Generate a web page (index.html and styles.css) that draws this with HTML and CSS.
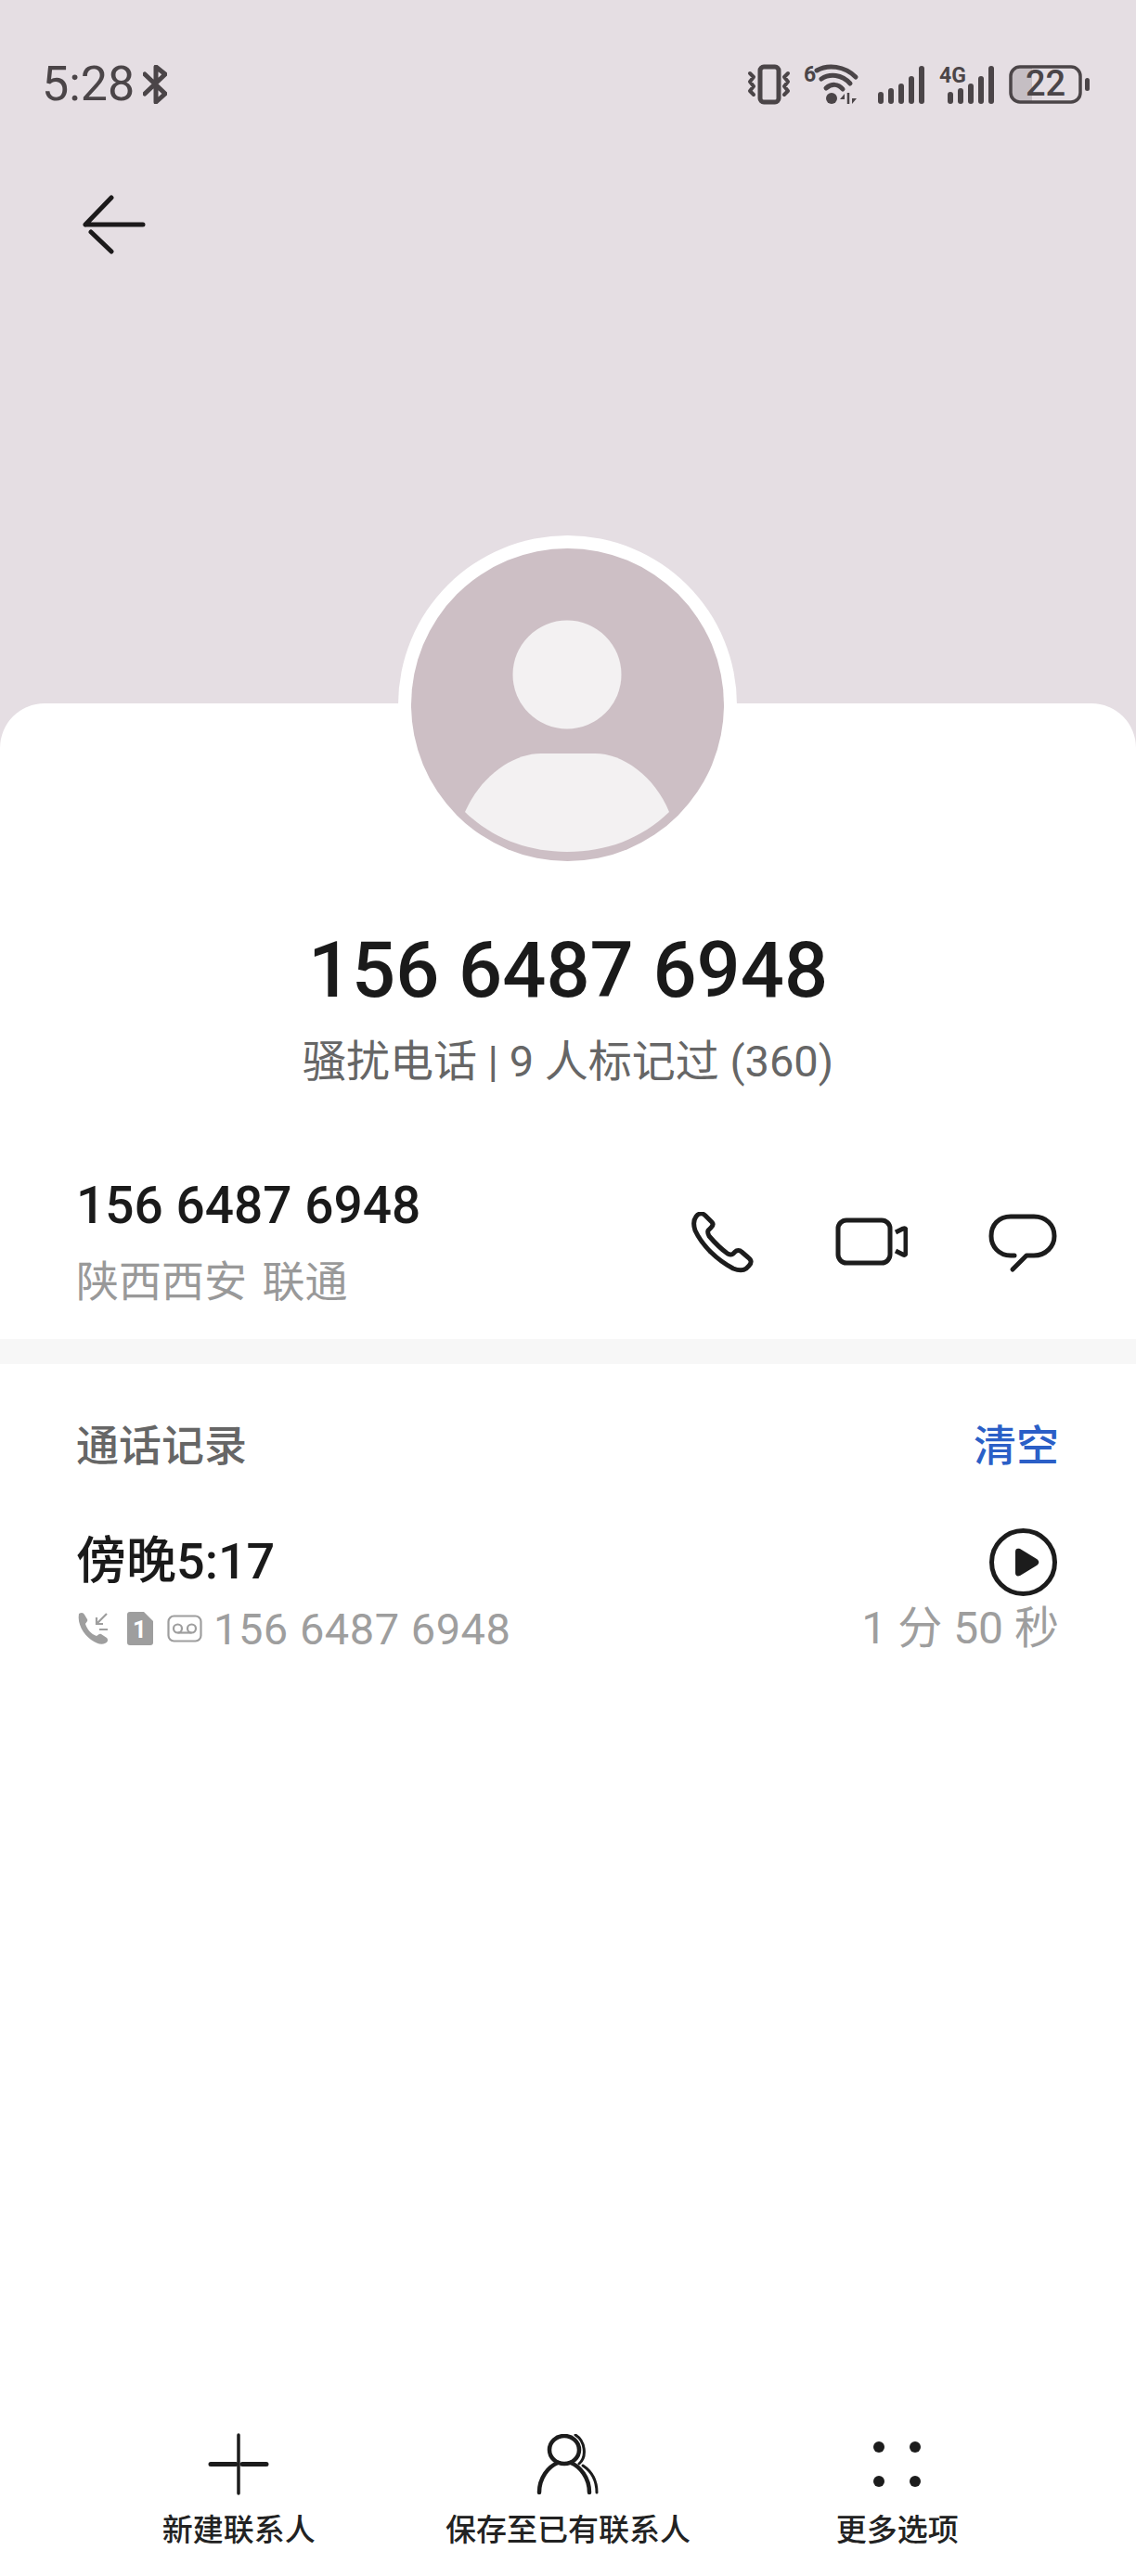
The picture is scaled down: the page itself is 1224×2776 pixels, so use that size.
FILE: index.html
```html
<!DOCTYPE html>
<html lang="zh-CN">
<head>
    <meta charset="UTF-8">
    <meta name="viewport" content="width=device-width, initial-scale=1.0">
    <title>通话详情</title>
    <link rel="stylesheet" href="styles.css">
</head>
<body>
<div class="page">
    <header class="header">
        <div class="status-bar">
            <div class="status-left">
                <span class="status-time">5:28</span>
                <svg class="icon-bt" width="26" height="42" viewBox="0 0 26 42"><path d="M2 31 L24 10 L14 2 V40 L24 31 L2 10" fill="none" stroke="#4b4548" stroke-width="5" stroke-linecap="round" stroke-linejoin="round"/></svg>
            </div>
            <div class="status-right">
                <!-- vibrate -->
                <svg width="47" height="50" viewBox="0 -4 47 50" fill="none" stroke="#4b4548">
                    <rect x="14" y="2" width="20" height="38" rx="4" stroke-width="5"/>
                    <path d="M3 9 L7 13 L3 18 L7 23 L3 28 L7 32 M44 9 L40 13 L44 18 L40 23 L44 28 L40 32" stroke-width="4" stroke-linecap="round" stroke-linejoin="round"/>
                </svg>
                <!-- wifi 6 -->
                <svg width="66" height="50" viewBox="0 -4 66 50" fill="none" stroke="#4b4548">
                    <text x="0" y="18" class="status-mini">6</text>
                    <path d="M14 6 C26 -1 44 1 56 13 M19 15 C28 9 41 10 50 20 M24 25 C30 20 37 20 42 26" stroke-width="5" stroke-linecap="round"/>
                    <circle cx="30" cy="36" r="6" fill="#4b4548" stroke="none"/>
                    <path d="M44 31 L39 37 H44 Z M52 36 H57 L52 42 Z" fill="#4b4548" stroke="none"/>
                    <path d="M48 30 V42" stroke-width="2.5"/>
                </svg>
                <!-- signal -->
                <svg width="52" height="42" viewBox="0 0 52 42" fill="#4b4548">
                    <rect x="0" y="29" width="6" height="13" rx="3"/>
                    <rect x="11" y="25" width="6" height="17" rx="3"/>
                    <rect x="22" y="20" width="6" height="22" rx="3"/>
                    <rect x="33" y="12" width="6" height="30" rx="3"/>
                    <rect x="44" y="1" width="6" height="41" rx="3"/>
                </svg>
                <!-- 4G signal -->
                <svg width="61" height="50" viewBox="0 -4 61 50" fill="#4b4548">
                    <text x="0" y="19" class="status-mini">4G</text>
                    <rect x="9" y="29" width="6" height="13" rx="3"/>
                    <rect x="20" y="25" width="6" height="17" rx="3"/>
                    <rect x="31" y="20" width="6" height="22" rx="3"/>
                    <rect x="42" y="12" width="6" height="30" rx="3"/>
                    <rect x="53" y="1" width="6" height="41" rx="3"/>
                </svg>
                <!-- battery -->
                <svg width="87" height="50" viewBox="0 -4 87 50">
                    <path d="M10 3 H25 V39 H10 A8 8 0 0 1 2 31 V11 A8 8 0 0 1 10 3 Z" fill="#c5bec3"/>
                    <rect x="2" y="2" width="75" height="38" rx="10" fill="none" stroke="#4b4548" stroke-width="3.5"/>
                    <rect x="82" y="14" width="5" height="14" rx="2.5" fill="#4b4548"/>
                    <text x="39.5" y="33" text-anchor="middle" class="battery-num">22</text>
                </svg>
            </div>
        </div>
        <div class="back-row">
            <svg width="70" height="64" viewBox="0 0 70 64" fill="none" stroke="#1c1a1b" stroke-width="5" stroke-linecap="round">
                <path d="M4 32 L32 3 M4 32 H66 M10 40 L32 61"/>
            </svg>
        </div>
    </header>

    <div class="avatar">
        <svg width="337" height="337" viewBox="0 0 337 337">
            <circle cx="168.5" cy="168.5" r="168.5" fill="#cdbfc5"/>
            <circle cx="168" cy="136" r="58.5" fill="#f3f1f2"/>
            <path d="M58 284 C75 245 110 221 140 221 H198 C228 221 262 245 278 284 C248 313 210 327 168 327 C126 327 88 313 58 284 Z" fill="#f3f1f2"/>
        </svg>
    </div>

    <main class="card">
        <h1 class="caller-number">156 6487 6948</h1>
        <p class="caller-tag">骚扰电话 | 9 人标记过 (360)</p>

        <section class="contact-row">
            <div>
                <div class="contact-number">156 6487 6948</div>
                <div class="contact-region">陕西西安 联通</div>
            </div>
            <div class="contact-actions">
                <svg width="68" height="66" viewBox="0 0 68 66" fill="none" stroke="#1c1c1c" stroke-width="5" stroke-linejoin="round">
                    <path d="M5 5 C8 1 12 1 15 4 L22 11 C24 13 23 15 21 17 L18 20 C17 22 18 24 19 26 C25 33 32 40 39 45 C41 46 43 47 45 45 L47 43 C49 41 52 41 54 43 L61 49 C65 52 65 55 62 58 L59 61 C55 64 50 63 45 61 C28 52 12 37 4 20 C2 14 2 9 5 5 Z"/>
                </svg>
                <svg width="78" height="66" viewBox="0 0 78 66" fill="none" stroke="#1c1c1c" stroke-width="5" stroke-linejoin="round">
                    <rect x="3" y="9" width="56" height="46" rx="9"/>
                    <path d="M65 22 L73 18 C76 17 76 19 76 21 V43 C76 46 75 47 73 46 L65 42"/>
                </svg>
                <svg width="74" height="66" viewBox="0 0 74 66" fill="none" stroke="#1c1c1c" stroke-width="5" stroke-linecap="round" stroke-linejoin="round">
                    <path d="M28 47 H24 C11 47 3 37 3 26 C3 14 11 5 24 5 H49 C62 5 71 14 71 26 C71 37 62 47 49 47 H41 L26 62"/>
                </svg>
            </div>
        </section>

        <div class="divider"></div>

        <section class="history">
            <div class="history-head">
                <span class="history-title">通话记录</span>
                <span class="history-clear">清空</span>
            </div>
            <div class="call-row">
                <div class="call-main">
                    <div class="call-time">傍晚5:17</div>
                    <div class="call-detail">
                        <svg width="34" height="36" viewBox="0 0 34 36" fill="#9e9e9e">
                            <path d="M2 2 C5 0 7 1 8 3 L11 8 C12 10 10 11 9 13 C11 19 15 24 21 26 C23 25 24 23 26 24 L32 28 C34 30 33 33 30 34 C26 36 21 34 15 30 C7 24 0 13 2 2 Z"/>
                            <path d="M32 2 L21 13 M21 6 V13 H28 M24 19 H33" fill="none" stroke="#9e9e9e" stroke-width="2.2"/>
                        </svg>
                        <svg width="28" height="36" viewBox="0 0 28 36">
                            <path d="M3 0 H18 L28 10 V33 A3 3 0 0 1 25 36 H3 A3 3 0 0 1 0 33 V3 A3 3 0 0 1 3 0 Z" fill="#9e9e9e"/>
                            <text x="13.5" y="28" text-anchor="middle" class="sim-num">1</text>
                        </svg>
                        <svg class="icon-mail" width="38" height="30" viewBox="0 0 38 30" fill="none" stroke="#9e9e9e" stroke-width="2.2">
                            <rect x="1.5" y="1.5" width="35" height="27" rx="6"/>
                            <circle cx="11.5" cy="15" r="4.5"/>
                            <circle cx="26.5" cy="15" r="4.5"/>
                            <path d="M11.5 19.5 H26.5"/>
                        </svg>
                        <span class="call-number">156 6487 6948</span>
                    </div>
                </div>
                <div class="call-side">
                    <svg class="icon-play" width="73" height="73" viewBox="0 0 73 73">
                        <circle cx="36.5" cy="36.5" r="34" fill="none" stroke="#1c1c1c" stroke-width="5"/>
                        <path d="M28 25 C28 22 30 21 33 22 L51 33 C54 35 54 38 51 40 L33 51 C30 52 28 51 28 48 Z" fill="#1c1c1c"/>
                    </svg>
                    <div class="call-duration">1 分 50 秒</div>
                </div>
            </div>
        </section>
    </main>

    <nav class="bottom-nav">
        <div class="nav-item">
            <div class="nav-icon">
                <svg width="66" height="67" viewBox="0 0 66 67" fill="none" stroke="#1c1c1c" stroke-linecap="round">
                    <path d="M33 2 V65" stroke-width="3.5"/>
                    <path d="M3 33.5 H30 M37 33.5 H63" stroke-width="5"/>
                </svg>
            </div>
            <span class="nav-label">新建联系人</span>
        </div>
        <div class="nav-item">
            <div class="nav-icon">
                <svg width="69" height="66" viewBox="0 0 69 66" fill="none" stroke="#1c1c1c" stroke-linecap="round">
                    <ellipse cx="31" cy="17" rx="16" ry="15" stroke-width="4.5"/>
                    <path d="M4 63 C4 47 14 35 24 31 M38 31 C48 35 58 47 58 63" stroke-width="4.5"/>
                    <path d="M43 1 C53 7 56 24 47 32 M51 34 C60 40 66 50 66 63" stroke-width="3"/>
                </svg>
            </div>
            <span class="nav-label">保存至已有联系人</span>
        </div>
        <div class="nav-item">
            <div class="nav-icon">
                <svg width="52" height="50" viewBox="0 0 52 50" fill="#1c1c1c">
                    <circle cx="6" cy="6" r="6"/>
                    <circle cx="45" cy="6" r="6"/>
                    <circle cx="6" cy="43" r="6"/>
                    <circle cx="45" cy="43" r="6"/>
                </svg>
            </div>
            <span class="nav-label">更多选项</span>
        </div>
    </nav>
</div>
</body>
</html>
```

FILE: styles.css
```css
* {
    box-sizing: border-box;
}

body {
    margin: 0;
    background: #fff;
    font-family: Roboto, "Noto Sans CJK SC", sans-serif;
}

svg {
    display: block;
    flex-shrink: 0;
}

.page {
    position: relative;
    display: flex;
    flex-direction: column;
    height: 2776px;
    overflow: hidden;
    background: #e5dee3;
}

.header {
    height: 758px;
    flex-shrink: 0;
}

.status-bar {
    display: flex;
    justify-content: space-between;
    align-items: center;
    height: 42px;
    margin-top: 70px;
    padding: 0 50px 0 45px;
}

.status-left {
    display: flex;
    align-items: center;
    gap: 9px;
}

.status-time {
    font-size: 52px;
    line-height: 42px;
    color: #4b4548;
}

.status-right {
    display: flex;
    align-items: center;
    gap: 14px;
}

.status-mini {
    font-size: 23px;
    font-weight: 700;
    fill: #4b4548;
    stroke: none;
}

.battery-num {
    font-size: 38px;
    font-weight: 500;
    fill: #4b4548;
}

.back-row {
    padding: 98px 0 0 88px;
}

.avatar {
    position: absolute;
    top: 577px;
    left: 429px;
    width: 365px;
    height: 365px;
    padding: 14px;
    border-radius: 50%;
    background: #fff;
    z-index: 1;
}

.card {
    flex: 1;
    padding-top: 246px;
    background: #fff;
    border-radius: 48px 48px 0 0;
}

.caller-number {
    margin: 0;
    font-size: 83px;
    line-height: 84px;
    font-weight: 500;
    color: #1a1a1a;
    text-align: center;
}

.caller-tag {
    margin: 26px 0 0;
    font-size: 47px;
    line-height: 60px;
    color: #666;
    text-align: center;
}

.contact-row {
    display: flex;
    justify-content: space-between;
    align-items: center;
    margin-top: 93px;
    padding: 0 85px 0 82px;
}

.contact-number {
    font-size: 55px;
    line-height: 64px;
    font-weight: 500;
    color: #1a1a1a;
}

.contact-region {
    margin-top: 20px;
    font-size: 46px;
    line-height: 60px;
    word-spacing: 5px;
    color: #999;
}

.contact-actions {
    display: flex;
    align-items: center;
    gap: 87px;
}

.divider {
    height: 27px;
    margin-top: 32px;
    background: #f7f7f7;
}

.history {
    padding: 58px 83px 0 82px;
}

.history-head {
    display: flex;
    justify-content: space-between;
    font-size: 46px;
    line-height: 60px;
    font-weight: 500;
}

.history-title {
    color: #666;
}

.history-clear {
    color: #2b5fc7;
}

.call-row {
    display: flex;
    justify-content: space-between;
    margin-top: 58px;
}

.call-time {
    margin-top: 3px;
    font-size: 54px;
    line-height: 68px;
    font-weight: 500;
    color: #1a1a1a;
}

.call-detail {
    display: flex;
    align-items: center;
    height: 60px;
    margin-top: 8px;
    padding-left: 1px;
    gap: 20px;
}

.icon-mail {
    margin-left: -5px;
}

.call-number {
    margin-left: -8px;
    font-size: 47px;
    letter-spacing: 0.5px;
    color: #9e9e9e;
}

.sim-num {
    font-size: 26px;
    font-weight: 700;
    fill: #fff;
}

.call-side {
    display: flex;
    flex-direction: column;
    align-items: flex-end;
}

.icon-play {
    margin: 1px 2px 0 0;
}

.call-duration {
    margin-top: 5px;
    font-size: 48px;
    line-height: 60px;
    color: #9e9e9e;
}

.bottom-nav {
    position: absolute;
    left: 0;
    right: 0;
    bottom: 0;
    display: grid;
    grid-template-columns: repeat(3, 1fr);
    padding: 0 80px 29px;
}

.nav-item {
    display: flex;
    flex-direction: column;
    align-items: center;
}

.nav-icon {
    display: flex;
    align-items: center;
    justify-content: center;
    height: 67px;
}

.nav-label {
    margin-top: 18px;
    font-size: 33px;
    line-height: 40px;
    font-weight: 500;
    color: #222;
}
```
